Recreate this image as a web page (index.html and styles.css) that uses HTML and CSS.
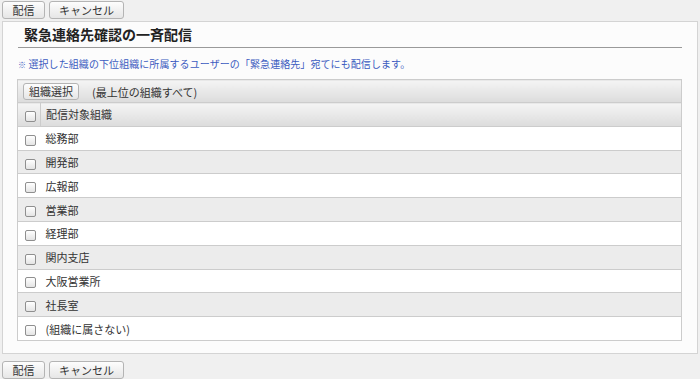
FILE: index.html
```html
<!DOCTYPE html>
<html lang="ja">
<head>
<meta charset="utf-8">
<link rel="stylesheet" href="styles.css">
</head>
<body>
<div class="bar">
  <button class="btn btn-send">配信</button>
  <button class="btn btn-cancel">キャンセル</button>
</div>
<div class="panel">
  <h1 class="title">緊急連絡先確認の一斉配信</h1>
  <p class="note"><span class="mark">※</span> 選択した組織の下位組織に所属するユーザーの「緊急連絡先」宛てにも配信します。</p>
  <table class="grid">
    <tr class="head">
      <td colspan="2" class="head-cell"><button class="btn btn-org">組織選択</button><span class="scope">(最上位の組織すべて)</span></td>
    </tr>
    <tr class="head">
      <td class="cb-cell"><span class="cb"></span></td>
      <td class="name">配信対象組織</td>
    </tr>
    <tr class="odd"><td class="cb-cell"><span class="cb"></span></td><td class="name">総務部</td></tr>
    <tr class="even"><td class="cb-cell"><span class="cb"></span></td><td class="name">開発部</td></tr>
    <tr class="odd"><td class="cb-cell"><span class="cb"></span></td><td class="name">広報部</td></tr>
    <tr class="even"><td class="cb-cell"><span class="cb"></span></td><td class="name">営業部</td></tr>
    <tr class="odd"><td class="cb-cell"><span class="cb"></span></td><td class="name">経理部</td></tr>
    <tr class="even"><td class="cb-cell"><span class="cb"></span></td><td class="name">関内支店</td></tr>
    <tr class="odd"><td class="cb-cell"><span class="cb"></span></td><td class="name">大阪営業所</td></tr>
    <tr class="even"><td class="cb-cell"><span class="cb"></span></td><td class="name">社長室</td></tr>
    <tr class="odd"><td class="cb-cell"><span class="cb"></span></td><td class="name">(組織に属さない)</td></tr>
  </table>
</div>
<div class="bar bar-bottom">
  <button class="btn btn-send">配信</button>
  <button class="btn btn-cancel">キャンセル</button>
</div>
</body>
</html>
```
FILE: styles.css
```css
* { box-sizing: border-box; }
html, body { margin: 0; padding: 0; }
body {
  background: #f0f0f0;
  font-family: "Noto Sans CJK JP", "Noto Sans", sans-serif;
  font-size: 11px;
  color: #333;
  width: 700px;
}
.bar {
  display: flex;
  gap: 4px;
  padding: 1px 0 0 2px;
  height: 21px;
}
.bar-bottom {
  padding-top: 7px;
  height: auto;
}
.btn {
  font-family: "Noto Sans CJK JP", "Noto Sans", sans-serif;
  font-size: 11px;
  color: #333;
  height: 18px;
  padding: 0;
  line-height: 16px;
  border: 1px solid #b4b4b4;
  border-radius: 3px;
  background: linear-gradient(#fdfdfd, #e6e6e6);
  cursor: pointer;
}
.btn-send { width: 43px; }
.btn-cancel { width: 75px; }
.panel {
  margin-left: 2px;
  width: 696px;
  height: 333px;
  background: #fcfcfc;
  border: 1px solid #d4d4d4;
  padding: 0 15px 0 14px;
}
.title {
  margin: 0;
  font-size: 14px;
  font-weight: bold;
  color: #222;
  height: 26px;
  line-height: 22px;
  padding: 1px 0 0 6px;
  border-bottom: 1px solid #9a9a9a;
  margin-left: 1px;
}
.note {
  margin: 0;
  height: 31px;
  line-height: 31px;
  padding-left: 1px;
  color: #3b5bc0;
  font-size: 10px;
  letter-spacing: 0.08px;
}
.mark { font-size: 8px; }
.grid {
  width: 665px;
  border-collapse: collapse;
  border: 1px solid #cccccc;
}
.grid td {
  border-top: 1px solid #cccccc;
  height: 23.8px;
  padding: 0;
  vertical-align: middle;
}
.head td {
  background: linear-gradient(#f4f4f4, #dcdcdc);
}
.head-cell {
  height: 23px !important;
  padding-left: 5px !important;
}
.btn-org {
  width: 56px;
  height: 17px;
  line-height: 15px;
  vertical-align: middle;
}
.scope {
  margin-left: 13px;
  vertical-align: middle;
}
.cb-cell {
  width: 23px;
  text-align: center;
  border-right: 1px solid #cccccc;
}
.odd td { background: #ffffff; }
.even td { background: #ececec; }
.odd .cb-cell, .even .cb-cell { border-right: none; }
.name { padding-left: 5px !important; }
.cb {
  display: inline-block;
  width: 11px;
  height: 11px;
  border: 1px solid #8f8f8f;
  border-radius: 2px;
  background: linear-gradient(#ffffff, #e4e4e4);
  vertical-align: middle;
  margin-left: 3px;
}
```
